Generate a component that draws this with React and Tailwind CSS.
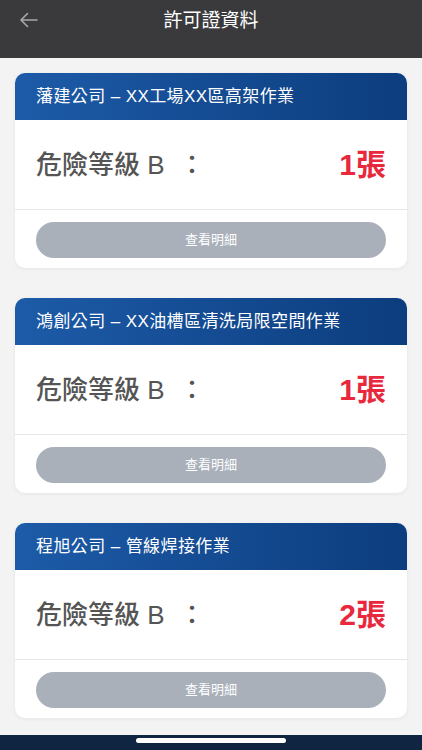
import React from 'react';

const permits = [
    { title: '藩建公司 – XX工場XX區高架作業', level: 'B', count: 1 },
    { title: '鴻創公司 – XX油槽區清洗局限空間作業', level: 'B', count: 1 },
    { title: '程旭公司 – 管線焊接作業', level: 'B', count: 2 },
];

const PermitCard = ({ title, level, count }) => (
    <div className="bg-white rounded-[10px] overflow-hidden shadow-[0_1px_4px_rgba(0,0,0,0.06)]">
        {/* Company / job header */}
        <div className="h-[47px] flex items-center px-[21px] bg-gradient-to-r from-[#1d5ba8] to-[#0c3d7e]">
            <span className="text-white text-[17px] leading-none tracking-[0.4px]">{title}</span>
        </div>

        <div className="h-[89px] flex items-center justify-between px-[21px]">
            <span className="text-[#555555] text-[26px] font-medium leading-none whitespace-pre">
                {`危險等級 ${level}  ：`}
            </span>
            <span className="text-[#e8283c] text-[30px] font-bold leading-none">{count}張</span>
        </div>

        <div className="h-px bg-[#e6e6e6]" />

        <div className="px-[21px] pt-[12px] pb-[10px]">
            <button className="w-full h-[36px] rounded-full bg-[#a9b0ba] text-white text-[13px]">
                查看明細
            </button>
        </div>
    </div>
);

export default function App() {
    return (
        <div
            className="w-[422px] h-[750px] flex flex-col bg-[#f3f3f3] overflow-hidden"
            style={{ fontFamily: '"Liberation Sans", "Noto Sans CJK TC", sans-serif' }}
        >
            {/* Top bar */}
            <div className="h-[58px] shrink-0 bg-[#3a3a3c] flex items-center relative">
                <svg className="absolute left-[19px] top-[12px]" width="19" height="16" viewBox="0 0 19 16" fill="none">
                    <path d="M18 8H2M8.5 1.5L2 8l6.5 6.5" stroke="#a8a8a8" strokeWidth="1.6" strokeLinecap="round" strokeLinejoin="round" />
                </svg>
                <div className="w-full text-center text-white text-[19px] -mt-[16px]">許可證資料</div>
            </div>

            <div className="flex-1 flex flex-col gap-[30px] px-[15px] pt-[15px]">
                {permits.map(p => (
                    <PermitCard key={p.title} {...p} />
                ))}
            </div>

            {/* Bottom home indicator */}
            <div className="h-[15px] shrink-0 bg-[#0f2541] flex justify-center pt-[3px]">
                <div className="w-[150px] h-[5px] rounded-full bg-white" />
            </div>
        </div>
    );
}
